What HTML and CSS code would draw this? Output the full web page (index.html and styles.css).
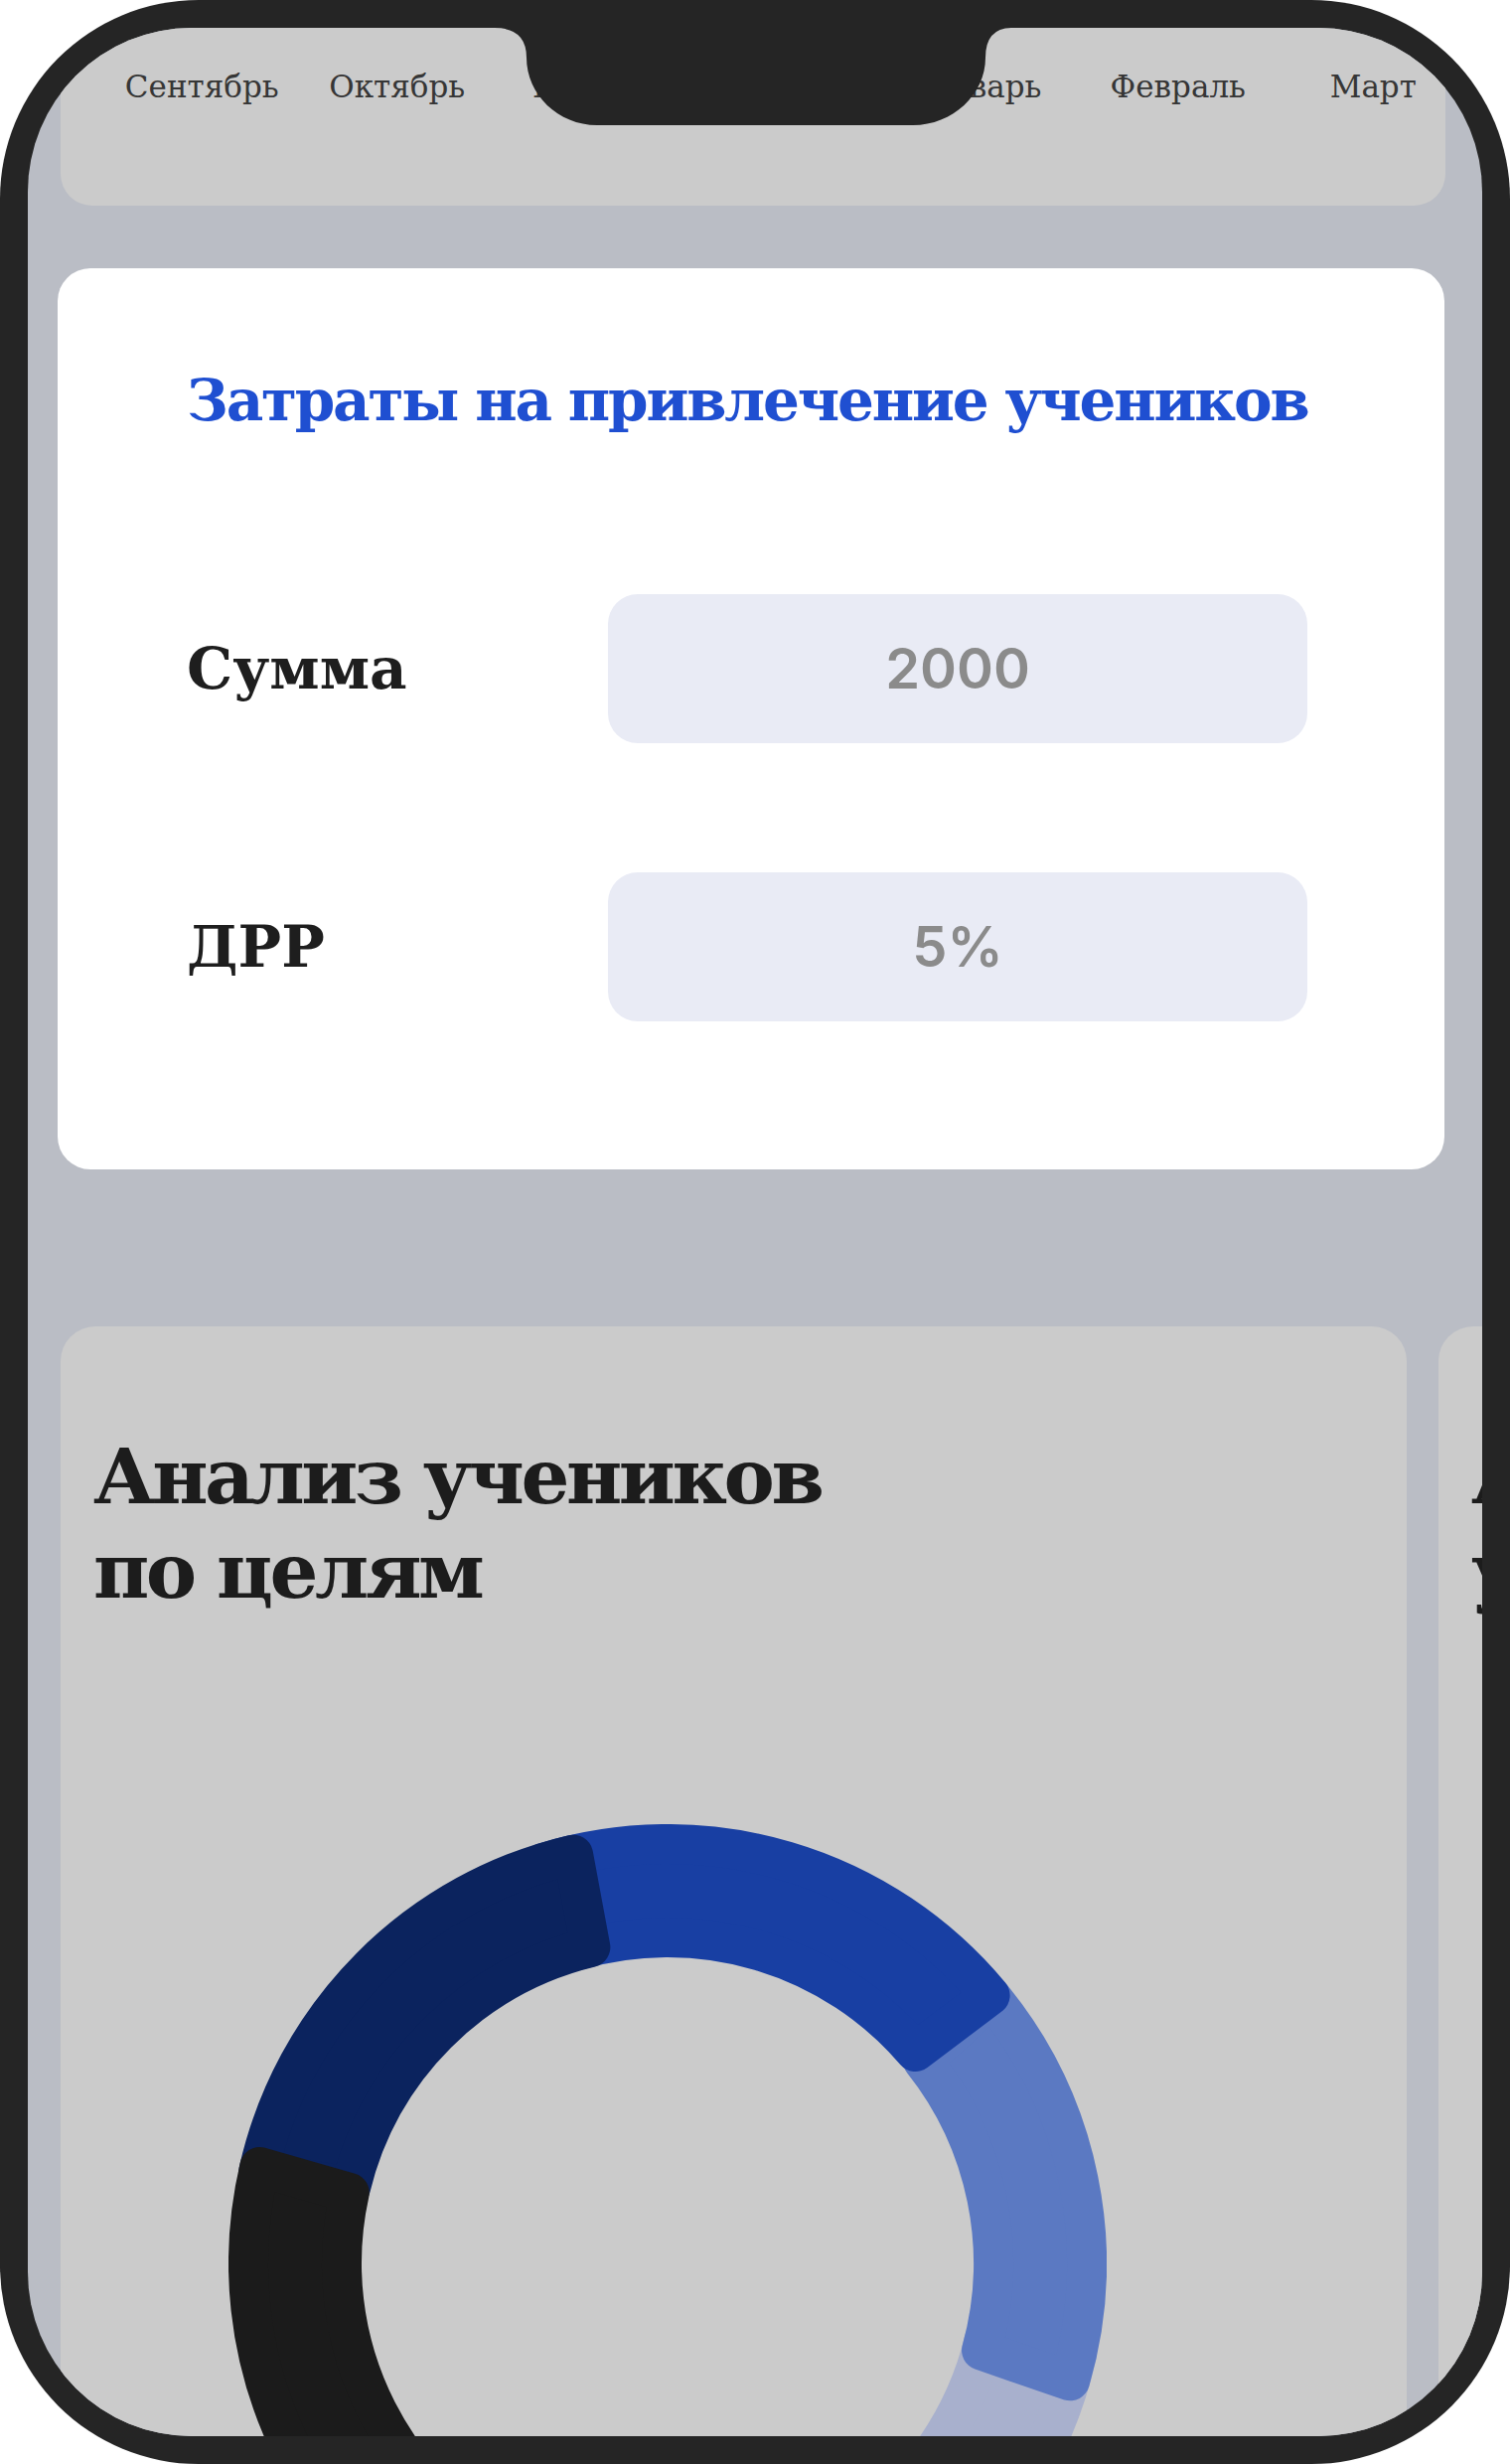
FILE: index.html
```html
<!DOCTYPE html>
<html lang="ru">
<head>
<meta charset="utf-8">
<title>Аналитика</title>
<link rel="stylesheet" href="styles.css">
</head>
<body>
<div class="phone">
  <div class="screen">
    <section class="months-card">
      <div class="months">
        <span class="month">Сентябрь</span>
        <span class="month">Октябрь</span>
        <span class="month">Ноябрь</span>
        <span class="month">Декабрь</span>
        <span class="month">Январь</span>
        <span class="month">Февраль</span>
        <span class="month">Март</span>
      </div>
    </section>

    <section class="cost-card">
      <h2 class="cost-title">Затраты на привлечение учеников</h2>
      <div class="field field-first">
        <span class="field-label">Сумма</span>
        <div class="field-input">2000</div>
      </div>
      <div class="field">
        <span class="field-label">ДРР</span>
        <div class="field-input">5%</div>
      </div>
    </section>

    <div class="carousel">
      <article class="chart-card">
        <h2 class="chart-title">Анализ учеников<br>по целям</h2>
        <svg class="donut" viewBox="0 0 884 884" width="884" height="884">
          <g stroke-width="40" stroke-linejoin="round">
            <path class="seg seg-pale" d="M853.66 534.88A422 422 0 0 1 248.55 817.05L295.62 735.52A328 328 0 0 0 760.95 518.54Z"/>
            <path class="seg seg-light" d="M768.63 174.80A422 422 0 0 1 847.07 560.34L758.06 529.69A328 328 0 0 0 698.67 237.79Z"/>
            <path class="seg seg-blue" d="M316.61 39.05A422 422 0 0 1 766.62 172.35L691.44 229.01A328 328 0 0 0 348.81 127.52Z"/>
            <path class="seg seg-navy" d="M30.34 349.12A422 422 0 0 1 347.04 30.64L364.36 123.97A328 328 0 0 0 123.05 365.46Z"/>
            <path class="seg seg-black" d="M279.04 831.27A422 422 0 0 1 31.29 345.02L121.78 370.97A328 328 0 0 0 311.24 742.81Z"/>
          </g>
        </svg>
      </article>
      <article class="chart-card">
        <h2 class="chart-title">Активность<br>учеников</h2>
      </article>
    </div>
  </div>

  <svg class="notch" viewBox="0 0 560 130" width="560" height="130">
    <path d="M0 0H560V28H539Q512 28 512 58C512 95 479 126 439 126H121C82 126 50 95 50 58Q50 28 18 28H0Z"/>
  </svg>
</div>
</body>
</html>
```

FILE: styles.css
```css
html, body {
  margin: 0;
  padding: 0;
  background: #ffffff;
}

.phone {
  position: relative;
  width: 1520px;
  height: 2480px;
  box-sizing: border-box;
  padding: 28px;
  background: #252525;
  border-radius: 200px;
}

.screen {
  height: 100%;
  background: #babdc5;
  border-radius: 165px;
  overflow: hidden;
  display: flex;
  flex-direction: column;
}

/* Month strip */
.months-card {
  flex-shrink: 0;
  margin: -40px 37px 0 33px;
  padding: 79px 0 100px 44px;
  background: #cbcbcb;
  border-radius: 32px;
  overflow: hidden;
}

.months {
  display: flex;
}

.month {
  flex: 0 0 196.5px;
  text-align: center;
  font-family: "DejaVu Serif", "Liberation Serif", serif;
  font-size: 31px;
  line-height: 40px;
  color: #363636;
  white-space: nowrap;
}

/* Cost card */
.cost-card {
  flex-shrink: 0;
  margin: 63px 38px 0 30px;
  padding: 98px 138px 149px 130px;
  background: #ffffff;
  border-radius: 33px;
}

.cost-title {
  margin: 0;
  font-family: "DejaVu Serif", "Liberation Serif", serif;
  font-weight: 700;
  font-size: 58px;
  line-height: 70px;
  letter-spacing: -2.2px;
  color: #1f4fd1;
  white-space: nowrap;
}

.field {
  display: flex;
  align-items: center;
  margin-top: 130px;
}

.field-first {
  margin-top: 160px;
}

.field-label {
  flex: 0 0 424px;
  font-family: "DejaVu Serif", "Liberation Serif", serif;
  font-weight: 700;
  font-size: 58px;
  color: #1e1e1e;
}

.field-input {
  flex: 0 0 704px;
  height: 150px;
  display: flex;
  align-items: center;
  justify-content: center;
  background: #e9ebf5;
  border-radius: 30px;
  font-family: Inter, "Noto Sans", sans-serif;
  font-weight: 600;
  font-size: 56px;
  color: #8b8b8b;
}

/* Chart carousel */
.carousel {
  flex-shrink: 0;
  display: flex;
  gap: 32px;
  margin-top: 158px;
  padding-left: 33px;
}

.chart-card {
  flex: 0 0 1355px;
  height: 1400px;
  box-sizing: border-box;
  padding: 104px 33px 0;
  background: #cbcbcb;
  border-radius: 35px;
}

.chart-title {
  margin: 0;
  font-family: "DejaVu Serif", "Liberation Serif", serif;
  font-weight: 700;
  font-size: 77px;
  line-height: 95px;
  letter-spacing: -3.5px;
  color: #1c1c1c;
  white-space: nowrap;
}

.donut {
  display: block;
  margin: 207px 0 0 135.5px;
}

.seg-pale  { fill: #a8b0cd; stroke: #a8b0cd; }
.seg-light { fill: #5b79c2; stroke: #5b79c2; }
.seg-blue  { fill: #183fa3; stroke: #183fa3; }
.seg-navy  { fill: #0b235e; stroke: #0b235e; }
.seg-black { fill: #1b1b1b; stroke: #1b1b1b; }

/* Camera notch */
.notch {
  position: absolute;
  left: 480px;
  top: 0;
  fill: #252525;
}
```
